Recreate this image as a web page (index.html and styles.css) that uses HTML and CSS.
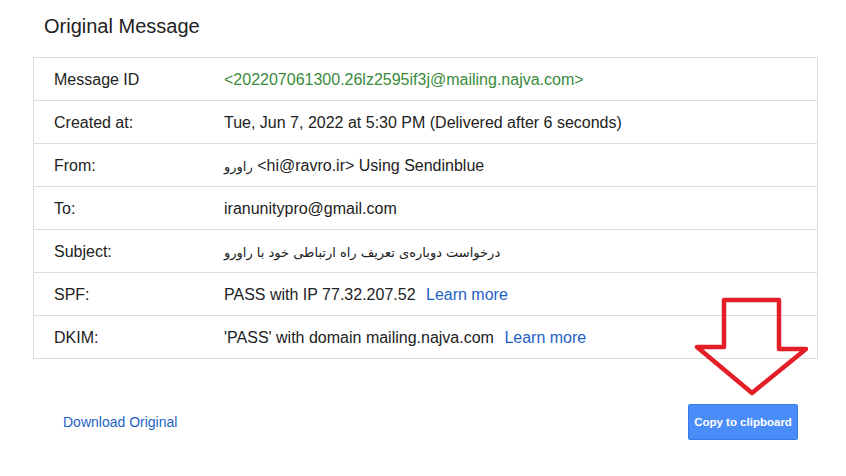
FILE: index.html
```html
<!DOCTYPE html>
<html lang="en">
<head>
  <meta charset="UTF-8" />
  <title>Original Message</title>
  <link rel="stylesheet" href="styles.css">
</head>
<body>
  <div class="page">
    <h1 class="title">Original Message</h1>

    <div class="details">
      <div class="row">
        <div class="label">Message ID</div>
        <div class="value msg-id">&lt;202207061300.26lz2595if3j@mailing.najva.com&gt;</div>
      </div>
      <div class="row">
        <div class="label">Created at:</div>
        <div class="value">Tue, Jun 7, 2022 at 5:30 PM (Delivered after 6 seconds)</div>
      </div>
      <div class="row">
        <div class="label">From:</div>
        <div class="value"><span class="fa">راورو</span> &lt;hi@ravro.ir&gt; Using Sendinblue</div>
      </div>
      <div class="row">
        <div class="label">To:</div>
        <div class="value">iranunitypro@gmail.com</div>
      </div>
      <div class="row">
        <div class="label">Subject:</div>
        <div class="value"><span class="fa">درخواست دوباره‌ی تعریف راه ارتباطی خود با راورو</span></div>
      </div>
      <div class="row">
        <div class="label">SPF:</div>
        <div class="value">PASS with IP 77.32.207.52 <a class="link" href="#">Learn more</a></div>
      </div>
      <div class="row">
        <div class="label">DKIM:</div>
        <div class="value">'PASS' with domain mailing.najva.com <a class="link" href="#">Learn more</a></div>
      </div>
    </div>

    <div class="footer">
      <a class="download" href="#">Download Original</a>
      <button class="copy-btn">Copy to clipboard</button>
    </div>

    <!-- red annotation arrow pointing at the button -->
    <svg class="arrow" width="120" height="100" viewBox="0 0 120 100">
      <polygon points="34,4 89,4 89,53 116,53 62,97 7,51 34,51"
               fill="none" stroke="#e41e26" stroke-width="4.5" stroke-linejoin="round" />
    </svg>
  </div>
</body>
</html>
```

FILE: styles.css
```css
body {
  margin: 0;
  font-family: 'Liberation Sans', Arial, sans-serif;
  background: #fff;
  color: #222;
}

.page {
  position: relative;
  width: 846px;
  height: 476px;
  padding-top: 14px;
  box-sizing: border-box;
}

.title {
  margin: 0 0 19px 44px;
  font-size: 20px;
  line-height: 24px;
  font-weight: normal;
  color: #222;
}

.details {
  margin-left: 33px;
  width: 785px;
  box-sizing: border-box;
  border: 1px solid #dcdcdc;
  border-bottom: none;
  background: #fff;
}

.row {
  display: flex;
  align-items: center;
  height: 43px;
  padding-top: 1px;
  box-sizing: border-box;
  border-bottom: 1px solid #dcdcdc;
  font-size: 16px;
}

.label {
  width: 190px;
  padding-left: 20px;
  box-sizing: border-box;
  flex-shrink: 0;
}

.value {
  white-space: nowrap;
}

.msg-id {
  color: #3a8a3c;
}

.fa {
  font-family: 'DejaVu Sans', sans-serif;
  font-size: 13px;
}

.link {
  color: #1e5fc6;
  text-decoration: none;
  margin-left: 6px;
}

.footer {
  display: flex;
  justify-content: space-between;
  align-items: center;
  margin: 45px 0 0 33px;
  width: 785px;
  padding: 0 20px 0 30px;
  box-sizing: border-box;
  height: 36px;
}

.download {
  color: #1e5fc6;
  font-size: 14px;
  text-decoration: none;
}

.copy-btn {
  width: 110px;
  height: 36px;
  background: #4a8df8;
  border: 1px solid #3a7ae8;
  border-radius: 2px;
  color: #fff;
  font-family: 'Liberation Sans', Arial, sans-serif;
  font-size: 11.5px;
  font-weight: bold;
  padding: 0;
  cursor: pointer;
}

.arrow {
  position: absolute;
  left: 690px;
  top: 296px;
}
```
